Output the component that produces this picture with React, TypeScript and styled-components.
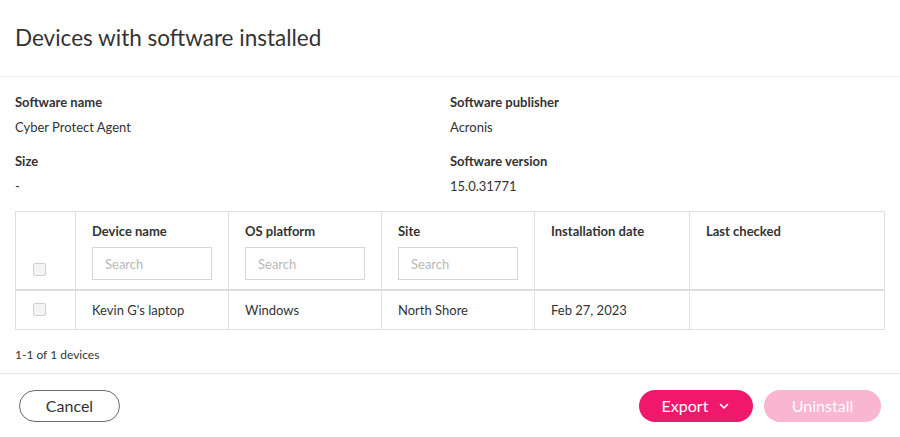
import styled, { createGlobalStyle } from "styled-components";

const GlobalStyle = createGlobalStyle`
  html, body {
    margin: 0;
    padding: 0;
    background: #fff;
  }
  body {
    font-family: Lato, "Noto Sans", "Liberation Sans", sans-serif;
    color: #333;
  }
  * { box-sizing: border-box; }
`;

const Dialog = styled.div`
  width: 900px;
  height: 437px;
  display: flex;
  flex-direction: column;
  background: #fff;
`;

const Header = styled.div`
  height: 77px;
  padding: 0 15px;
  display: flex;
  align-items: center;
  border-bottom: 1px solid #efefef;
`;

const Title = styled.h1`
  margin: 0;
  padding-bottom: 1px;
  font-size: 22.5px;
  font-weight: 400;
  color: #333;
`;

const Body = styled.div`
  flex: 1;
  padding: 16px 15px 0;
`;

const Details = styled.div`
  display: grid;
  grid-template-columns: 435px 1fr;
  row-gap: 16px;
`;

const Field = styled.div`
  display: flex;
  flex-direction: column;
  gap: 7px;
`;

const Label = styled.div`
  font-size: 13px;
  font-weight: 700;
  line-height: 18px;
  color: #333;
`;

const Value = styled.div`
  font-size: 13px;
  line-height: 18px;
  color: #333;
`;

const Table = styled.table`
  margin-top: 16px;
  width: 870px;
  border-collapse: collapse;
  table-layout: fixed;
  font-size: 13px;
`;

const HeadCell = styled.th<{ $w: number }>`
  width: ${(p) => p.$w}px;
  border: 1px solid #e0e0e0;
  border-bottom: 2px solid #dcdcdc;
  padding: 10px 16px 9px;
  text-align: left;
  vertical-align: top;
  font-weight: 700;
  color: #333;
  height: 76px;
`;

const CheckHead = styled(HeadCell)`
  vertical-align: bottom;
  padding: 0 0 13px 17px;
`;

const HeadLabel = styled.div`
  line-height: 18px;
  margin-bottom: 7px;
`;

const SearchInput = styled.input`
  width: 120px;
  height: 33px;
  border: 1px solid #d6d6d6;
  border-radius: 0;
  padding: 0 12px;
  font-family: inherit;
  font-size: 13px;
  color: #333;
  outline: none;
  &::placeholder {
    color: #b8b8b8;
  }
`;

const Cell = styled.td`
  border: 1px solid #e0e0e0;
  padding: 0 16px;
  height: 39px;
  color: #333;
  vertical-align: middle;
`;

const CheckCell = styled(Cell)`
  padding: 0 0 0 17px;
`;

const Checkbox = styled.span`
  display: block;
  width: 13px;
  height: 13px;
  border: 1px solid #cfcfcf;
  border-radius: 2px;
  background: #f4f4f4;
`;

const Count = styled.div`
  margin-top: 17px;
  font-size: 12px;
  color: #333;
`;

const Footer = styled.div`
  height: 64px;
  border-top: 1px solid #e8e8e8;
  padding: 0 19px 0 19px;
  display: flex;
  align-items: center;
  justify-content: space-between;
`;

const Actions = styled.div`
  display: flex;
  gap: 11px;
`;

const Pill = styled.button<{ $w: number; $variant: "outline" | "primary" | "disabled" }>`
  width: ${(p) => p.$w}px;
  height: 32px;
  border-radius: 16px;
  font-family: inherit;
  font-size: 16px;
  display: flex;
  align-items: center;
  justify-content: center;
  gap: 10px;
  padding: 0;
  cursor: pointer;
  border: 1px solid
    ${(p) => (p.$variant === "outline" ? "#6b6b6b" : "transparent")};
  background: ${(p) =>
    p.$variant === "outline"
      ? "#fff"
      : p.$variant === "primary"
      ? "#f0186c"
      : "#f9b6d0"};
  color: ${(p) => (p.$variant === "outline" ? "#333" : "#fff")};
`;

const columns = [
  { key: "device", label: "Device name", w: 153, search: true },
  { key: "os", label: "OS platform", w: 153, search: true },
  { key: "site", label: "Site", w: 153, search: true },
  { key: "date", label: "Installation date", w: 155, search: false },
  { key: "checked", label: "Last checked", w: 195, search: false },
];

const rows = [
  {
    device: "Kevin G's laptop",
    os: "Windows",
    site: "North Shore",
    date: "Feb 27, 2023",
    checked: "",
  },
];

function Chevron() {
  return (
    <svg width="12" height="12" viewBox="0 0 12 12" fill="none">
      <path
        d="M2.5 4.5 6 8l3.5-3.5"
        stroke="#fff"
        strokeWidth="1.6"
        strokeLinecap="round"
        strokeLinejoin="round"
      />
    </svg>
  );
}

export default function App() {
  return (
    <>
      <GlobalStyle />
      <Dialog>
        <Header>
          <Title>Devices with software installed</Title>
        </Header>
        <Body>
          <Details>
            <Field>
              <Label>Software name</Label>
              <Value>Cyber Protect Agent</Value>
            </Field>
            <Field>
              <Label>Software publisher</Label>
              <Value>Acronis</Value>
            </Field>
            <Field>
              <Label>Size</Label>
              <Value>-</Value>
            </Field>
            <Field>
              <Label>Software version</Label>
              <Value>15.0.31771</Value>
            </Field>
          </Details>
          <Table>
            <thead>
              <tr>
                <CheckHead $w={60}>
                  <Checkbox />
                </CheckHead>
                {columns.map((c) => (
                  <HeadCell key={c.key} $w={c.w}>
                    <HeadLabel>{c.label}</HeadLabel>
                    {c.search && <SearchInput placeholder="Search" />}
                  </HeadCell>
                ))}
              </tr>
            </thead>
            <tbody>
              {rows.map((r, i) => (
                <tr key={i}>
                  <CheckCell>
                    <Checkbox />
                  </CheckCell>
                  {columns.map((c) => (
                    <Cell key={c.key}>{r[c.key as keyof typeof r]}</Cell>
                  ))}
                </tr>
              ))}
            </tbody>
          </Table>
          <Count>1-1 of 1 devices</Count>
        </Body>
        <Footer>
          <Pill $w={101} $variant="outline">
            Cancel
          </Pill>
          <Actions>
            <Pill $w={114} $variant="primary">
              Export <Chevron />
            </Pill>
            <Pill $w={117} $variant="disabled">
              Uninstall
            </Pill>
          </Actions>
        </Footer>
      </Dialog>
    </>
  );
}
